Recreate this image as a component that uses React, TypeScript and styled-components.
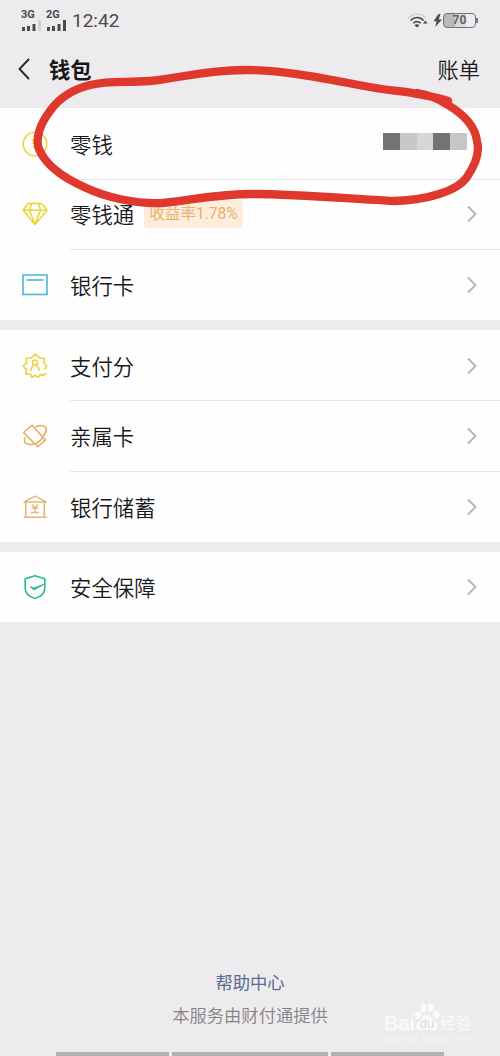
import * as React from "react";
import styled, { createGlobalStyle } from "styled-components";

const GlobalStyle = createGlobalStyle`
  * {
    box-sizing: border-box;
  }
  body {
    margin: 0;
    background: #edebed;
  }
`;

const Page = styled.div`
  position: relative;
  display: flex;
  flex-direction: column;
  width: 500px;
  height: 1056px;
  overflow: hidden;
  background: #edebed;
  color: #18171a;
  font-family: "Noto Sans CJK SC", sans-serif;
`;

const StatusBar = styled.div`
  display: flex;
  align-items: center;
  justify-content: space-between;
  height: 40px;
  padding: 0 22px 0 21px;
  color: #4c4a4c;
`;

const StatusGroup = styled.div`
  display: flex;
  align-items: center;
`;

const Network = styled.div<{ $width: number }>`
  display: flex;
  flex-direction: column;
  width: ${(props) => props.$width}px;
  margin: 0 4px 0 0;
  font: bold 11px/10px Roboto, sans-serif;
`;

const Clock = styled.span`
  font: 19px/22px Roboto, sans-serif;
  letter-spacing: 0;
  padding-top: 1px;
`;

const Battery = styled.div`
  display: flex;
  align-items: center;
  justify-content: center;
  width: 33px;
  height: 15px;
  border: 1px solid #777577;
  border-radius: 4px;
  background: linear-gradient(90deg, #bab8ba 0 11px, #dbd9db 11px 22px, #edebed 22px);
  font: bold 12px/13px Roboto, sans-serif;
  color: #666466;
`;

const BatteryTip = styled.span`
  width: 2px;
  height: 5px;
  background: #777577;
`;

const Header = styled.header`
  display: flex;
  align-items: center;
  height: 68px;
  padding: 0 20px 10px 17px;
`;

const Title = styled.h1`
  flex: 1;
  margin: 0 0 0 17px;
  font-size: 21.3px;
  font-weight: 700;
  line-height: 30px;
`;

const HeaderLink = styled.span`
  font-size: 21.3px;
  font-weight: 350;
  line-height: 30px;
`;

const Group = styled.section`
  margin-bottom: 10px;
  background: #fefefe;
`;

const Row = styled.div`
  display: flex;
  align-items: stretch;
  height: 70.6px;
  padding-left: 22px;
`;

const RowIcon = styled.div`
  display: flex;
  align-items: center;
  width: 48px;
  padding-top: 1px;
`;

const RowBody = styled.div<{ $last?: boolean }>`
  display: flex;
  flex: 1;
  align-items: center;
  padding: 1px 22px 0 0;
  box-shadow: 0 1px ${(props) => (props.$last ? "transparent" : "#e6e4e6")};
`;

const Label = styled.span`
  font-size: 21.4px;
  font-weight: 350;
  line-height: 30px;
`;

const Rate = styled.span`
  margin-left: 10px;
  padding: 0 5px;
  border-radius: 4px;
  background: #feeddd;
  color: #e9b16c;
  font: 15.6px/28px Roboto, "Noto Sans CJK SC", sans-serif;
`;

const RowEnd = styled.div`
  display: flex;
  margin-left: auto;
`;

const Mosaic = styled.div`
  display: flex;
  margin: 0 11px 4px 0;
`;

const Block = styled.span<{ $color: string; $width?: number }>`
  width: ${(props) => props.$width ?? 17}px;
  height: 17px;
  background: ${(props) => props.$color};
`;

const Footer = styled.footer`
  display: flex;
  flex-direction: column;
  align-items: center;
  margin-top: auto;
`;

const HelpLink = styled.span`
  color: #586c94;
  font-size: 17.3px;
  line-height: 26px;
`;

const Provider = styled.span`
  margin: 6px 0 24px;
  color: #858385;
  font-size: 17.3px;
  font-weight: 350;
  line-height: 27px;
`;

const NavBars = styled.div`
  display: grid;
  grid-template-columns: 113px 156px 113px;
  gap: 3px;
  height: 4px;
`;

const NavBar = styled.span`
  background: #b2b0b2;
`;

const Watermark = styled.div`
  position: absolute;
  left: 384px;
  top: 1001px;
  display: flex;
  flex-direction: column;
  color: #fbfafb;
`;

const WatermarkLogo = styled.div`
  display: flex;
  align-items: flex-end;
  height: 31px;
  font: 21px/18px "Liberation Sans", sans-serif;
  -webkit-text-stroke: 0.5px #fbfafb;
`;

const WatermarkName = styled.span`
  font: 15.5px/20px "Noto Sans CJK SC", sans-serif;
  -webkit-text-stroke: 0;
`;

const WatermarkUrl = styled.span`
  font: 11px/13px "Liberation Sans", sans-serif;
  color: #f5f3f5;
`;

const Annotation = styled.svg`
  position: absolute;
  left: 0;
  top: 0;
  pointer-events: none;
`;

const Signal = ({ faded }: { faded?: boolean }) => (
  <svg width="20" height="11" viewBox="0 0 20 11" fill="#4c4a4c">
    <path d="M1 7h3v4H1zM6 6h3v5H6zM11.5 4h3v7h-3z" />
    <path d="M17 0h3v11h-3z" fill={faded ? "#d2d0d2" : "#4c4a4c"} />
  </svg>
);

const Chevron = () => (
  <svg width="12" height="18" viewBox="0 0 12 18" fill="none" stroke="#b4b2b4" strokeWidth="1.8">
    <path d="M2 1.5l7.5 7.5L2 16.5" />
  </svg>
);

const iconProps = {
  width: 26,
  height: 26,
  viewBox: "0 0 26 26",
  fill: "none",
  strokeWidth: 1.6,
  strokeLinejoin: "round" as const,
};

const CoinIcon = () => (
  <svg {...iconProps} stroke="#e9d934">
    <circle cx="13" cy="13" r="11.8" />
    <path d="M9.5 8l3.5 4 3.5-4M9.500 12.5h6.500M9.500 16h6.500M13 12v6" strokeWidth="1.2" />
  </svg>
);

const DiamondIcon = () => (
  <svg {...iconProps} stroke="#e8d62e" strokeWidth="1.4">
    <path d="M6.2 2.5h13.6L25 9.2 13 23.5 1 9.2zM1 9.2h24M9.5 2.5L7.5 9.2 13 23.5l5.5-14.3-2-6.7" />
  </svg>
);

const CardIcon = () => (
  <svg {...iconProps} stroke="#4bb5dc">
    <path d="M1 3h24v19.5H1z" strokeLinejoin="miter" />
    <path d="M4.5 8h17" />
  </svg>
);

const ScoreIcon = () => (
  <svg {...iconProps} stroke="#e8d43a">
    <path d="M22.5 16.5l2.2-3.500-3-3.200.7-4.300-4.600-.4L13 1.200 9.400 4.800l-5.200.3.400 4.800L1.200 13l3.200 3.600-.7 4.500 4.800.2 1.200 3 3.300-1.800 3.300 1.800 2.200-3 2.400 1.500 3.600-3" />
    <circle cx="13" cy="9.5" r="2.5" strokeWidth="1.5" />
    <path d="M8.800 18c0-3 1.200-4.200 2.700-6M17.200 18c0-3-1.200-4.200-2.700-6" strokeWidth="1.5" />
  </svg>
);

const FamilyIcon = () => (
  <svg {...iconProps} stroke="#e8a95a" strokeWidth="1.5">
    <path d="M1.500 9.500L10 2.200 23.500 17l-7.700 6.700zM13.800 21.300l7.500-6.700" />
    <path d="M13.500 4c4.500-2.200 9.500-1.800 10.500 1 .8 2.700-.6 5.700-3.200 8.500M3.200 14c-1.400 3-.8 5.600 1.300 6.700 2.300 1.200 5.300 1 8 0" />
  </svg>
);

const BankIcon = () => (
  <svg {...iconProps} stroke="#e2b574" strokeWidth="1.5">
    <path d="M2 7.900L13 2.200l11 5.700zM3.700 8v14.500M22.300 8v14.500M1.500 23.200h23" />
    <path d="M10 10.500l3 3.500 3-3.500M9.500 14.200h7M9 18.500h8M13 13.500v5" strokeWidth="1.3" />
  </svg>
);

const ShieldIcon = () => (
  <svg {...iconProps} stroke="#27bd83">
    <path d="M13 1.800l9.800 3v9.500c0 4.700-3.500 8.300-9.800 10.300-6.300-2-9.800-5.600-9.800-10.300V4.800z" />
    <path d="M8 12.500l3.800 3.500L22.500 10l-10.600 4z" fill="#27bd83" strokeWidth=".9" />
  </svg>
);

interface Item {
  label: string;
  icon: React.ReactNode;
  rate?: string;
  hidden?: boolean;
}

const groups: Item[][] = [
  [
    { label: "零钱", icon: <CoinIcon />, hidden: true },
    { label: "零钱通", icon: <DiamondIcon />, rate: "收益率1.78%" },
    { label: "银行卡", icon: <CardIcon /> },
  ],
  [
    { label: "支付分", icon: <ScoreIcon /> },
    { label: "亲属卡", icon: <FamilyIcon /> },
    { label: "银行储蓄", icon: <BankIcon /> },
  ],
  [{ label: "安全保障", icon: <ShieldIcon /> }],
];

function WalletRow({ item, last }: { item: Item; last: boolean }) {
  return (
    <Row>
      <RowIcon>{item.icon}</RowIcon>
      <RowBody $last={last}>
        <Label>{item.label}</Label>
        {item.rate && <Rate>{item.rate}</Rate>}
        <RowEnd>
          {item.hidden ? (
            <Mosaic>
              <Block $color="#747274" />
              <Block $color="#c9c7c9" />
              <Block $color="#d8d5d8" $width={16} />
              <Block $color="#747274" />
              <Block $color="#c7c5c7" />
            </Mosaic>
          ) : (
            <Chevron />
          )}
        </RowEnd>
      </RowBody>
    </Row>
  );
}

export default function App() {
  return (
    <Page>
      <GlobalStyle />
      <StatusBar>
        <StatusGroup>
          <Network $width={21}>
            3G
            <Signal faded />
          </Network>
          <Network $width={22}>
            2G
            <Signal />
          </Network>
          <Clock>12:42</Clock>
        </StatusGroup>
        <StatusGroup>
          <svg width="21" height="15" viewBox="0 0 21 15" fill="none" stroke="#4c4a4c" strokeWidth="1.6">
            <path d="M1 5.5c5-5.5 13-5.5 17.5-.5" stroke="#d2d0d2" />
            <path d="M3.5 7.5c4-4 9.5-4 13 0M6.3 10.3c2.2-2.2 5.3-2.2 7.4 0" />
            <path d="M7.5 12.2c1.4-1.3 3.6-1.3 5 0L10 14.5zM16 10.5l2.3-3 2.3 3z" fill="#4c4a4c" stroke="none" />
          </svg>
          <svg width="15" height="15" viewBox="0 0 15 15" fill="#4c4a4c">
            <path d="M10.5 1L5.5 8.2h3L7.3 14l6.7-7.6h-3.3L12.5 1z" />
          </svg>
          <Battery>70</Battery>
          <BatteryTip />
        </StatusGroup>
      </StatusBar>

      <Header>
        <svg width="15" height="22" viewBox="0 0 15 22" fill="none" stroke="#29272a" strokeWidth="1.9">
          <path d="M12 1L2.5 11 12 21" />
        </svg>
        <Title>钱包</Title>
        <HeaderLink>账单</HeaderLink>
      </Header>

      {groups.map((items) => (
        <Group key={items[0].label}>
          {items.map((item, i) => (
            <WalletRow key={item.label} item={item} last={i === items.length - 1} />
          ))}
        </Group>
      ))}

      <Footer>
        <HelpLink>帮助中心</HelpLink>
        <Provider>本服务由财付通提供</Provider>
        <NavBars>
          <NavBar />
          <NavBar />
          <NavBar />
        </NavBars>
      </Footer>

      <Watermark>
        <WatermarkLogo>
          Bai
          <svg width="26" height="30" viewBox="0 0 26 30" fill="#fbfafb" stroke="none">
            <ellipse cx="4" cy="13" rx="3" ry="4" />
            <ellipse cx="9.5" cy="6" rx="3" ry="4.3" />
            <ellipse cx="17" cy="6" rx="3" ry="4.3" />
            <ellipse cx="22.5" cy="13" rx="3" ry="4" />
            <path d="M13 13c5 0 5 4 8.500 7 4 4 1.500 9-3 8.500-4-.6-7-.6-11 0-5 .5-7-4.500-3-8.500 3.500-3 3.500-7 8.500-7z" />
            <text x="13" y="26" textAnchor="middle" fontSize="13" fontFamily="Liberation Sans" fill="#dddbdd" style={{ WebkitTextStroke: "0.3px #dddbdd" }}>
              du
            </text>
          </svg>
          <WatermarkName>经验</WatermarkName>
        </WatermarkLogo>
        <WatermarkUrl>jingyan.baidu.com</WatermarkUrl>
      </Watermark>

      <Annotation width="500" height="220" viewBox="0 0 500 220" fill="none" stroke="#df392e" strokeWidth="8.3" strokeLinecap="round" strokeLinejoin="round">
        <path d="M448 101C437 97 428 96 417 94C405 91 390 91 370 87C335 81 290 70 245 70C205 70 180 78 150 81C127 83 110 80 90 85C70 90 57 101 50 111C40 124 35 139 39 149C45 164 62 177 84 187C107 198 136 204 162 203C190 201 205 195 250 194C300 194 350 199 395 201C425 200 457 192 467 177C476 164 480 152 477 141C475 125 463 114 448 105C439 99 430 95 417 93" />
      </Annotation>
    </Page>
  );
}
